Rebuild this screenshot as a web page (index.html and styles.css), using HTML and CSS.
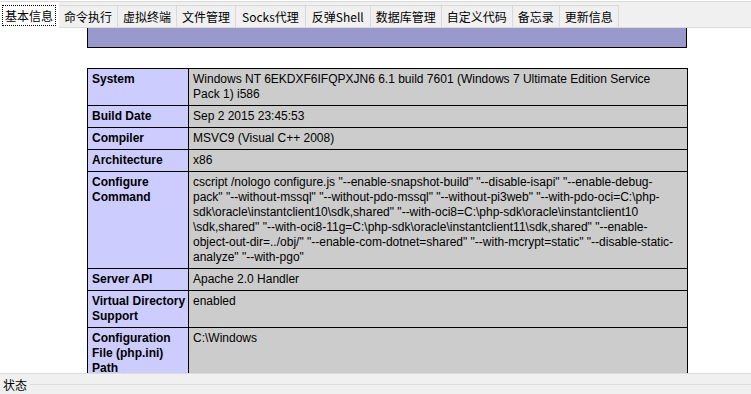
FILE: index.html
```html
<!DOCTYPE html>
<html lang="zh-CN">
<head>
	<meta charset="UTF-8">
	<title>基本信息</title>
	<link rel="stylesheet" href="styles.css">
</head>
<body>

	<!-- 上方选项卡 -->
	<div class="tabbar">
		<div class="tab on"><span class="focus">基本信息</span></div>
		<div class="tab">命令执行</div>
		<div class="tab">虚拟终端</div>
		<div class="tab">文件管理</div>
		<div class="tab latin">Socks代理</div>
		<div class="tab latin">反弹Shell</div>
		<div class="tab">数据库管理</div>
		<div class="tab">自定义代码</div>
		<div class="tab">备忘录</div>
		<div class="tab">更新信息</div>
	</div>

	<!-- phpinfo 内容 -->
	<div class="content">
		<div class="banner"></div>
		<table class="info">
			<colgroup>
				<col class="col-e">
				<col class="col-v">
			</colgroup>
			<tr>
				<td class="e">System</td>
				<td class="v">Windows NT 6EKDXF6IFQPXJN6 6.1 build 7601 (Windows 7 Ultimate Edition Service<br>Pack 1) i586</td>
			</tr>
			<tr>
				<td class="e">Build Date</td>
				<td class="v">Sep 2 2015 23:45:53</td>
			</tr>
			<tr>
				<td class="e">Compiler</td>
				<td class="v">MSVC9 (Visual C++ 2008)</td>
			</tr>
			<tr>
				<td class="e">Architecture</td>
				<td class="v">x86</td>
			</tr>
			<tr>
				<td class="e">Configure<br>Command</td>
				<td class="v">cscript /nologo configure.js "--enable-snapshot-build" "--disable-isapi" "--enable-debug-<br>pack" "--without-mssql" "--without-pdo-mssql" "--without-pi3web" "--with-pdo-oci=C:\php-<br>sdk\oracle\instantclient10\sdk,shared" "--with-oci8=C:\php-sdk\oracle\instantclient10<br>\sdk,shared" "--with-oci8-11g=C:\php-sdk\oracle\instantclient11\sdk,shared" "--enable-<br>object-out-dir=../obj/" "--enable-com-dotnet=shared" "--with-mcrypt=static" "--disable-static-<br>analyze" "--with-pgo"</td>
			</tr>
			<tr>
				<td class="e">Server API</td>
				<td class="v">Apache 2.0 Handler</td>
			</tr>
			<tr>
				<td class="e">Virtual Directory<br>Support</td>
				<td class="v">enabled</td>
			</tr>
			<tr>
				<td class="e">Configuration<br>File (php.ini)<br>Path</td>
				<td class="v">C:\Windows</td>
			</tr>
		</table>
	</div>

	<!-- 状态栏 -->
	<div class="status">
		<span class="status-txt">状态</span>
		<span class="status-line"></span>
	</div>

</body>
</html>
```

FILE: styles.css
```css
body{
	margin: 0;
	background-color: #fff;
	font-family: "Noto Sans CJK SC", "Liberation Sans", sans-serif;
	font-size: 12px;
	color: #000;
	overflow: hidden;
}

.tabbar{
	display: flex;
	align-items: flex-end;
	height: 25px;
	margin-top: 1px;
	background-color: #f0f0f0;
	border-top: 1px solid #dadada;
	border-bottom: 1px solid #dadada;
}

.tab{
	height: 21px;
	line-height: 21px;
	padding: 0 5px;
	border: 1px solid #d9d9d9;
	border-bottom: none;
	margin-left: -1px;
	white-space: nowrap;
}
.tab.latin{padding: 0 6px;}

.tab.on{
	position: relative;
	z-index: 1;
	height: 25px;
	line-height: 25px;
	margin-left: 0;
	margin-bottom: -1px;
	padding: 0 2px 0 1px;
	background-color: #fff;
	border-color: #fff;
}
.tab.on .focus{
	display: inline-block;
	line-height: 19px;
	padding: 0 2px;
	border: 1px dotted #000;
}

.content{
	height: 345px;
	overflow: hidden;
	padding-left: 87px;
	background-color: #fff;
}

.banner{
	width: 598px;
	height: 19px;
	background-color: #9999cc;
	border: 1px solid #000;
	border-top: none;
}

.info{
	margin-top: 20px;
	width: 600px;
	table-layout: fixed;
	border-collapse: collapse;
	font-family: "Liberation Sans", Arial, sans-serif;
	font-size: 12px;
	line-height: 15px;
}
.col-e{width: 101px;}
.col-v{width: 499px;}

.info td{
	border: 1px solid #000;
	padding: 3px 4px;
	vertical-align: top;
}
.info .e{
	background-color: #ccccff;
	font-weight: bold;
	white-space: nowrap;
}
.info .v{background-color: #cccccc;}

.status{
	display: flex;
	align-items: center;
	height: 20px;
	background-color: #f0f0f0;
	border-top: 1px solid #dcdcdc;
}
.status-txt{padding: 0 3px;}
.status-line{
	flex: 1;
	height: 1px;
	background-color: #dcdcdc;
}
```
